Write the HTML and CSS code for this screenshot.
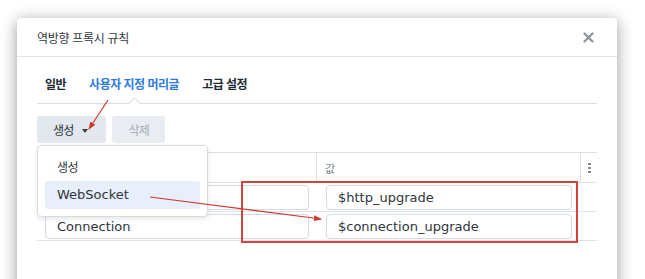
FILE: index.html
```html
<!DOCTYPE html>
<html lang="ko">
<head>
    <meta charset="UTF-8">
    <title>역방향 프록시 규칙</title>
    <link rel="stylesheet" href="styles.css">
</head>
<body>

<div class="dialog">
    <div class="dialog-header">
        <span class="dialog-title">역방향 프록시 규칙</span>
        <svg class="close" width="11" height="11" viewBox="0 0 11 11">
            <path d="M1.5 1.5 L9.5 9.5 M9.5 1.5 L1.5 9.5" stroke="#8d939b" stroke-width="2.2" stroke-linecap="round"/>
        </svg>
    </div>

    <div class="dialog-body">
        <div class="tabs">
            <div class="tab">일반</div>
            <div class="tab active">사용자 지정 머리글</div>
            <div class="tab">고급 설정</div>
        </div>

        <div class="toolbar">
            <button class="btn">생성 <span class="caret"></span></button>
            <button class="btn" disabled>삭제</button>
        </div>

        <div class="table">
            <div class="row head">
                <div class="cell"></div>
                <div class="cell">값</div>
                <div class="cell more"><span></span><span></span><span></span></div>
            </div>
            <div class="row">
                <div class="cell"><div class="field"></div></div>
                <div class="cell val"><div class="field">$http_upgrade</div></div>
            </div>
            <div class="row">
                <div class="cell"><div class="field">Connection</div></div>
                <div class="cell val"><div class="field">$connection_upgrade</div></div>
            </div>
        </div>

        <div class="menu">
            <div class="menu-item">생성</div>
            <div class="menu-item selected">WebSocket</div>
        </div>
    </div>
</div>

<svg class="marks" width="645" height="279" viewBox="0 0 645 279">
    <defs>
        <marker id="head" markerWidth="8" markerHeight="6" refX="7" refY="3" orient="auto" markerUnits="userSpaceOnUse">
            <path d="M0 0 L8 3 L0 6 Z" fill="#d0382f"/>
        </marker>
    </defs>
    <rect x="242" y="182" width="335" height="60" fill="none" stroke="#d0463b" stroke-width="2"/>
    <line x1="108" y1="100" x2="89" y2="129" stroke="#d0382f" stroke-width="1.2" marker-end="url(#head)"/>
    <line x1="150" y1="197" x2="321" y2="219" stroke="#d0382f" stroke-width="1.2" marker-end="url(#head)"/>
</svg>

</body>
</html>
```

FILE: styles.css
```css
body {
    margin: 0;
    height: 279px;
    overflow: hidden;
    position: relative;
    background: #fff;
    font-family: "DejaVu Sans", "Noto Sans CJK KR", sans-serif;
    color: #2f353c;
}

.dialog {
    margin: 18px 0 0 17px;
    width: 600px;
    height: 320px;
    background: #fff;
    border-radius: 4px 4px 0 0;
    box-shadow: 0 3px 16px rgba(0, 0, 0, 0.4);
    position: relative;
}

.dialog-header {
    height: 38px;
    padding: 0 20px;
    border-bottom: 1px solid #dfe3ea;
    display: flex;
    align-items: center;
    justify-content: space-between;
}

.dialog-title {
    font-family: "Noto Sans CJK KR", sans-serif;
    font-size: 12px;
    letter-spacing: -0.3px;
    color: #333a42;
}

.close {
    margin-right: 3px;
}

.dialog-body {
    padding: 0 20px;
}

.tabs {
    display: flex;
    gap: 23px;
    padding-left: 8px;
    border-bottom: 1px solid #d9dee6;
}

.tab {
    font-family: "Noto Sans CJK KR", sans-serif;
    font-size: 12px;
    font-weight: 700;
    letter-spacing: -0.5px;
    line-height: 20px;
    padding: 17px 0 9px;
    color: #222a33;
    position: relative;
}

.tab.active {
    color: #2f7ae3;
}

.tab.active::after {
    content: "";
    position: absolute;
    left: 50%;
    bottom: -5px;
    width: 8px;
    height: 8px;
    margin-left: -4px;
    background: #fff;
    border-top: 1px solid #d9dee6;
    border-left: 1px solid #d9dee6;
    transform: rotate(45deg);
}

.toolbar {
    display: flex;
    gap: 6px;
    margin-top: 12px;
}

.btn {
    height: 27px;
    padding: 0 16px;
    border: none;
    border-radius: 3px;
    background: #e3e8ee;
    font-family: "Noto Sans CJK KR", sans-serif;
    font-size: 12px;
    letter-spacing: -0.8px;
    color: #2c333a;
    display: flex;
    align-items: center;
}

.btn[disabled] {
    color: #a3abb4;
    background: #e9edf1;
}

.caret {
    display: inline-block;
    margin-left: 9px;
    margin-right: 2px;
    margin-top: 3px;
    border-left: 3.5px solid transparent;
    border-right: 3.5px solid transparent;
    border-top: 4px solid #3a4149;
}

.table {
    margin-top: 9px;
    border-top: 1px solid #dbe0e8;
}

.row {
    display: grid;
    grid-template-columns: 280px 264px 16px;
    border-bottom: 1px solid #dfe3ea;
}

.row.head {
    height: 29px;
}

.row.head .cell {
    font-family: "Noto Sans CJK KR", sans-serif;
    font-size: 11px;
    color: #7d858e;
    display: flex;
    align-items: center;
    padding-left: 8px;
    border-right: 1px solid #dbe0e8;
}

.row.head .cell.more {
    border-right: none;
    padding-left: 7px;
    flex-direction: column;
    align-items: flex-start;
    justify-content: center;
    gap: 1.5px;
}

.more span {
    width: 2.5px;
    height: 2.5px;
    background: #858c94;
}

.cell {
    padding: 2px 8px 1px 8px;
}

.cell.val {
    padding: 2px 9px 1px 9px;
}

.field {
    height: 23px;
    border: 1px solid #d3dae4;
    border-radius: 4px;
    padding-left: 11px;
    font-size: 13px;
    line-height: 23px;
    color: #2f353c;
}

.menu {
    position: absolute;
    left: 20px;
    top: 127px;
    width: 155px;
    padding: 7px;
    background: #fff;
    border: 1px solid #d6dce4;
    border-radius: 4px;
    box-shadow: 0 2px 5px rgba(0, 0, 0, 0.1);
}

.menu-item {
    height: 28px;
    line-height: 28px;
    padding-left: 12px;
    font-size: 13px;
    color: #2f353c;
    border-radius: 3px;
}

.menu-item:first-child {
    font-family: "Noto Sans CJK KR", sans-serif;
    font-size: 12px;
    letter-spacing: -0.6px;
}

.menu-item.selected {
    background: #e8effb;
}

.marks {
    position: absolute;
    left: 0;
    top: 0;
}
```
